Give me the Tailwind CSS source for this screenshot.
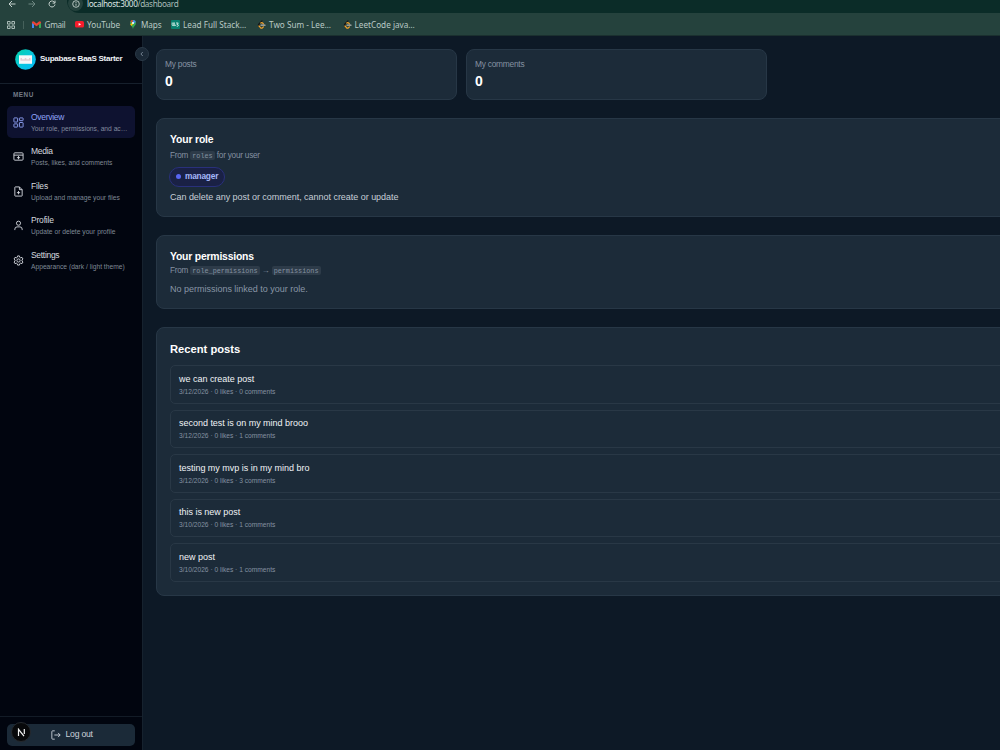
<!DOCTYPE html>
<html lang="en">
<head>
    <meta charset="UTF-8">
    <meta name="viewport" content="width=device-width, initial-scale=1.0">
    <title>Dashboard</title>
    <script src="https://cdn.jsdelivr.net/npm/@tailwindcss/browser@4"></script>
</head>
<body class="w-[1000px] h-[750px] overflow-hidden flex flex-col bg-[#0d1926] font-['Liberation_Sans',sans-serif]">
    <!-- Browser toolbar -->
    <header class="h-[36px] shrink-0 bg-[#25423d] border-b border-[#1b302f] font-['Noto_Sans',sans-serif] text-[#b9c9c5]">
        <div class="h-[13px] flex">
            <div class="w-[67px] shrink-0 flex pl-[8px] gap-[12px]">
                <svg class="size-[8px] text-[#c3d0cc]" viewBox="0 0 8 8" fill="none" stroke="currentColor" stroke-width="1"><path d="M7.5 4H1M4 1 1 4l3 3"/></svg>
                <svg class="size-[8px] text-[#6f8883]" viewBox="0 0 8 8" fill="none" stroke="currentColor" stroke-width="1"><path d="M.5 4H7M4 1l3 3-3 3"/></svg>
                <svg class="size-[8px] text-[#c3d0cc]" viewBox="0 0 8 8" fill="none" stroke="currentColor" stroke-width="1"><path d="M6.8 2.8A3 3 0 1 0 7 4.5M7 .6v2.5H4.6"/></svg>
            </div>
            <div class="flex-1 h-[13px] bg-[#0b2c28] rounded-bl-[12px] flex">
                <div class="size-[15px] -mt-[4px] ml-[1px] rounded-full bg-[#25423d] flex items-center justify-center">
                    <svg class="size-[8px] text-[#c3d0cc]" viewBox="0 0 8 8" fill="none" stroke="currentColor" stroke-width=".9"><circle cx="4" cy="4" r="3.3"/><path d="M4 3.6v2.2M4 2v.9"/></svg>
                </div>
                <span class="ml-[4px] -mt-[2px] text-[8.2px] leading-[12px] tracking-[-0.36px] whitespace-nowrap text-[#a9bcb8]"><span class="text-[#dbe5e2]">localhost:3000</span>/dashboard</span>
            </div>
        </div>
        <div class="h-[23px] flex items-center text-[8.2px] leading-[12px] whitespace-nowrap">
            <svg class="size-[8px] ml-[7px]" viewBox="0 0 8 8" fill="none" stroke="currentColor" stroke-width=".9"><path d="M.5.5h2.6v2.6H.5zM4.9.5h2.6v2.6H4.9zM.5 4.9h2.6v2.6H.5zM4.9 4.9h2.6v2.6H4.9z"/></svg>
            <div class="w-px h-[8px] ml-[8px] bg-[#46615b]"></div>
            <a class="ml-[8px] w-[43px] flex items-center gap-[3.5px] tracking-[-0.3px]">
                <svg class="w-[9px] h-[7px]" viewBox="0 0 9 7"><path fill="#4285f4" d="M0 1.5 2 3v4H.6Q0 7 0 6.4z"/><path fill="#34a853" d="M9 1.5 7 3v4h1.4q.6 0 .6-.6z"/><path fill="#ea4335" d="M0 1.2Q.5-.4 2 .5l2.5 2L7 .5q1.5-.9 2 .7v.8L4.5 5.3 0 2z"/></svg>
                Gmail
            </a>
            <a class="w-[54px] flex items-center gap-[3px]">
                <svg class="w-[9px] h-[7px]" viewBox="0 0 9 7"><rect width="9" height="6.6" rx="1.6" fill="#f61c2c"/><path fill="#fff" d="M3.6 1.9v2.8L6.1 3.3z"/></svg>
                YouTube
            </a>
            <a class="w-[42px] flex items-center gap-[4px] tracking-[-0.1px]">
                <svg class="w-[8px] h-[9px]" viewBox="0 0 8 9"><path fill="#34a853" d="M4 9C3.7 6.500 1 5.500 1 3a3 3 0 0 1 6 0C7 5.500 4.300 6.500 4 9z"/><path fill="#4285f4" d="M4 0a3 3 0 0 1 2.800 2L4 4z"/><path fill="#ea4335" d="M4 0a3 3 0 0 0-2.500 1.300L3 3z"/><path fill="#fbbc04" d="M1.200 4.200 3 3l1 1.200L2.300 6z"/><circle cx="4" cy="3" r="1.100" fill="#fff"/></svg>
                Maps
            </a>
            <a class="w-[86px] flex items-center gap-[3px]">
                <svg class="size-[9px]" viewBox="0 0 9 9"><rect width="9" height="9" rx="1" fill="#08806f"/><path d="M1.200 2.500v2.200q0 1 .9 1t.9-1V2.500v2.200q0 1 .9 1t.9-1M5 3h2.300L6.100 4.400q1.300 0 1.300 1t-1.700.8" fill="none" stroke="#d9f0eb" stroke-width=".9"/></svg>
                Lead Full Stack…
            </a>
            <a class="w-[86px] flex items-center gap-[3px]">
                <svg class="size-[9px]" viewBox="0 0 9 9" fill="none" stroke-width="1.200" stroke-linecap="round"><path stroke="#151515" d="M5 .8 2 3.800Q1 5 2 6"/><path stroke="#f5a32b" d="M2 6l1.500 1.700q1 .9 2 0l.9-.9M3.800 3q1-.8 1.800 0l.8.8"/><path stroke="#b8b8b8" d="M4 5.200h4"/></svg>
                Two Sum - Lee…
            </a>
            <a class="flex items-center gap-[2.500px]">
                <svg class="size-[9px]" viewBox="0 0 9 9" fill="none" stroke-width="1.200" stroke-linecap="round"><path stroke="#151515" d="M5 .8 2 3.800Q1 5 2 6"/><path stroke="#f5a32b" d="M2 6l1.500 1.700q1 .9 2 0l.9-.9M3.800 3q1-.8 1.800 0l.8.8"/><path stroke="#b8b8b8" d="M4 5.200h4"/></svg>
                LeetCode java…
            </a>
        </div>
    </header>

    <div class="flex flex-1 min-h-0">
        <!-- Sidebar -->
        <aside class="relative w-[143px] shrink-0 flex flex-col bg-[#01050f] border-r border-[#16222e]">
            <div class="h-[48px] shrink-0 flex items-center pl-[15px] gap-[4px] border-b border-[#16202c]">
                <svg class="size-[21px]" viewBox="0 0 21 21">
                    <defs><linearGradient id="logo" x1="0" y1="0" x2="1" y2="1"><stop offset="0" stop-color="#06d3a6"/><stop offset=".6" stop-color="#08c4e4"/><stop offset="1" stop-color="#08b9f5"/></linearGradient></defs>
                    <circle cx="10.500" cy="10.500" r="10.300" fill="url(#logo)"/>
                    <rect x="4" y="6.300" width="13" height="8.500" fill="#f7f7f8"/>
                    <path d="M5.500 9.800h1.500M9.800 9.800h1.500M14 9.800h1.500M5.500 11h10" stroke="#cfa5ae" stroke-width=".7"/>
                </svg>
                <span class="text-[8.100px] tracking-[-0.32px] font-bold text-[#eef1f5] whitespace-nowrap">Supabase BaaS Starter</span>
            </div>
            <button class="absolute top-[11px] left-[135px] size-[14px] rounded-full bg-[#1b2937] border border-[#2a3947] text-[#8794a3] flex items-center justify-center">
                <svg class="size-[6px]" viewBox="0 0 6 6" fill="none" stroke="currentColor" stroke-width=".8"><path d="M3.800 1 1.900 3l1.900 2"/></svg>
            </button>

            <p class="mt-[7px] ml-[13px] text-[6.400px] leading-[8px] tracking-[0.5px] font-bold text-[#737b87]">MENU</p>

            <nav class="mt-[7px] mx-[7px] flex flex-col gap-[2.500px] text-[#d5d9df]">
                <a class="h-[32px] rounded-[5px] bg-[#0e1230] flex items-center pl-[6px] gap-[7px] text-[#8fa2f5]">
                    <svg class="size-[11px] shrink-0" viewBox="0 0 24 24" fill="none" stroke="currentColor" stroke-width="2"><rect x="2" y="2" width="8" height="9" rx="1"/><rect x="14" y="2" width="8" height="6" rx="1"/><rect x="2" y="15" width="8" height="7" rx="1"/><rect x="14" y="12" width="8" height="10" rx="1"/></svg>
                    <div class="pt-[1px]">
                        <p class="text-[8.500px] leading-[11px] tracking-[-0.300px]">Overview</p>
                        <p class="text-[6.700px] leading-[11px] whitespace-nowrap text-[#838b9e]">Your role, permissions, and ac…</p>
                    </div>
                </a>
                <a class="h-[32px] flex items-center pl-[6px] gap-[7px]">
                    <svg class="size-[11px] shrink-0" viewBox="0 0 24 24" fill="none" stroke="currentColor" stroke-width="2"><rect x="2" y="4" width="20" height="16" rx="2"/><path d="M2 9h20M12 11v7M8.500 14.500h7"/></svg>
                    <div class="pt-[1px]">
                        <p class="text-[8.500px] leading-[11px] tracking-[-0.300px]">Media</p>
                        <p class="text-[6.700px] leading-[11px] whitespace-nowrap text-[#7f8996]">Posts, likes, and comments</p>
                    </div>
                </a>
                <a class="h-[32px] flex items-center pl-[6px] gap-[7px]">
                    <svg class="size-[11px] shrink-0" viewBox="0 0 24 24" fill="none" stroke="currentColor" stroke-width="2"><path d="M14 2H5a1 1 0 0 0-1 1v18a1 1 0 0 0 1 1h14a1 1 0 0 0 1-1V8zM14 2v6h6M12 11v7M8.500 14.500h7"/></svg>
                    <div class="pt-[1px]">
                        <p class="text-[8.500px] leading-[11px] tracking-[-0.200px]">Files</p>
                        <p class="text-[6.700px] leading-[11px] whitespace-nowrap text-[#7f8996]">Upload and manage your files</p>
                    </div>
                </a>
                <a class="h-[32px] flex items-center pl-[6px] gap-[7px]">
                    <svg class="size-[11px] shrink-0" viewBox="0 0 24 24" fill="none" stroke="currentColor" stroke-width="2"><circle cx="12" cy="7" r="4.500"/><path d="M4 22v-2q0-5 5-5h6q5 0 5 5v2"/></svg>
                    <div class="pt-[1px]">
                        <p class="text-[8.500px] leading-[11px] tracking-[-0.200px]">Profile</p>
                        <p class="text-[6.700px] leading-[11px] whitespace-nowrap text-[#7f8996]">Update or delete your profile</p>
                    </div>
                </a>
                <a class="h-[32px] flex items-center pl-[6px] gap-[7px]">
                    <svg class="size-[11px] shrink-0" viewBox="0 0 24 24" fill="none" stroke="currentColor" stroke-width="2" stroke-linejoin="round"><path d="M10 2h4l.7 3 2 1.200 3-1 2 3.500L19.500 11v2l2.200 2.300-2 3.500-3-1-2 1.200-.7 3h-4l-.7-3-2-1.200-3 1-2-3.500L4.500 13v-2L2.300 8.700l2-3.500 3 1 2-1.200z"/><circle cx="12" cy="12" r="3.500"/></svg>
                    <div class="pt-[1px]">
                        <p class="text-[8.500px] leading-[11px] tracking-[-0.300px]">Settings</p>
                        <p class="text-[6.700px] leading-[11px] whitespace-nowrap text-[#7f8996]">Appearance (dark / light theme)</p>
                    </div>
                </a>
            </nav>

            <div class="relative mt-auto h-[34px] border-t border-[#121b26] px-[7px] pt-[7px]">
                <button class="w-full h-[22px] rounded-[5px] bg-[#1b2a38] flex items-center pl-[43.500px] gap-[5px] text-[8.700px] tracking-[-0.250px] text-[#c9d0d8]">
                    <svg class="size-[10px]" viewBox="0 0 24 24" fill="none" stroke="currentColor" stroke-width="2.200"><path d="M9 2H4a2 2 0 0 0-2 2v16a2 2 0 0 0 2 2h5M8 12h14M17 7l5 5-5 5"/></svg>
                    Log out
                </button>
                <div class="absolute left-[11px] top-[5px] size-[20px] rounded-full bg-[#08090b] border border-[#25292e] flex items-center justify-center">
                    <svg class="size-[9px]" viewBox="0 0 9 9" fill="none" stroke="#f2f2f2" stroke-width="1.200"><path d="M1.500 8V1.300L7 8.200M7.300 1v5"/></svg>
                </div>
            </div>
        </aside>

        <!-- Dashboard -->
        <main class="flex-1 min-w-0 overflow-hidden pl-[13px] pt-[13px]">
            <div class="w-[930px] flex flex-col gap-[18px]">
                <div class="flex gap-[9px]">
                    <div class="w-[301px] h-[50.500px] rounded-[8px] bg-[#1c2b39] border border-[#273746] px-[8px] pt-[9px]">
                        <p class="text-[8.400px] leading-[11px] tracking-[-0.250px] text-[#8491a1]">My posts</p>
                        <p class="mt-[2px] text-[14px] leading-[18px] font-bold text-white">0</p>
                    </div>
                    <div class="w-[301px] h-[50.500px] rounded-[8px] bg-[#1c2b39] border border-[#273746] px-[8px] pt-[9px]">
                        <p class="text-[8.400px] leading-[11px] tracking-[-0.250px] text-[#8491a1]">My comments</p>
                        <p class="mt-[2px] text-[14px] leading-[18px] font-bold text-white">0</p>
                    </div>
                </div>

                <section class="h-[99px] rounded-[8px] bg-[#1c2b39] border border-[#273746] px-[13px] pt-[13px]">
                    <h2 class="text-[10.400px] leading-[16px] tracking-[-0.150px] font-bold text-white">Your role</h2>
                    <p class="mt-[2px] text-[8.200px] leading-[11px] tracking-[-0.220px] text-[#8491a1]">From <code class="rounded-[2px] bg-[#2d3b49] px-[2px] py-[0.500px] font-['Liberation_Mono',monospace] text-[6.800px] tracking-normal">roles</code> for your user</p>
                    <div class="mt-[5px] -ml-px w-[56px] h-[20px] rounded-full bg-[#1a2145] border border-[#29307b] flex items-center pl-[6px] gap-[4px] text-[8.300px] tracking-[-0.200px] font-bold text-[#a5b7f9]">
                        <i class="size-[5px] rounded-full bg-[#5865f2]"></i>manager
                    </div>
                    <p class="mt-[4px] text-[9px] leading-[13px] tracking-[-0.030px] text-[#c6ced7]">Can delete any post or comment, cannot create or update</p>
                </section>

                <section class="h-[74.500px] rounded-[8px] bg-[#1c2b39] border border-[#273746] px-[13px] pt-[13px]">
                    <h2 class="text-[10.400px] leading-[16px] tracking-[-0.200px] font-bold text-white">Your permissions</h2>
                    <p class="text-[8.200px] leading-[11px] tracking-[-0.220px] text-[#8491a1]">From <code class="rounded-[2px] bg-[#2d3b49] px-[2px] py-[0.500px] font-['Liberation_Mono',monospace] text-[6.800px] tracking-normal">role_permissions</code> → <code class="rounded-[2px] bg-[#2d3b49] px-[2px] py-[0.500px] font-['Liberation_Mono',monospace] text-[6.800px] tracking-normal">permissions</code></p>
                    <p class="mt-[6px] text-[9px] leading-[13px] tracking-[-0.010px] text-[#8996a6]">No permissions linked to your role.</p>
                </section>

                <section class="h-[268.500px] rounded-[8px] bg-[#1c2b39] border border-[#273746] px-[13px] pt-[12.500px]">
                    <h2 class="text-[11.200px] leading-[16px] font-bold text-white">Recent posts</h2>
                    <ul class="mt-[8.500px] flex flex-col gap-[6px]">
                        <li class="h-[38.600px] rounded-[5px] border border-[#293846] px-[8px] pt-[6.500px]">
                            <p class="text-[9px] leading-[13px] tracking-[-0.020px] text-[#f0f3f6]">we can create post</p>
                            <p class="mt-[1px] text-[6.650px] leading-[10px] text-[#8491a1]">3/12/2026 · 0 likes · 0 comments</p>
                        </li>
                        <li class="h-[38.600px] rounded-[5px] border border-[#293846] px-[8px] pt-[6.500px]">
                            <p class="text-[9px] leading-[13px] tracking-[-0.020px] text-[#f0f3f6]">second test is on my mind brooo</p>
                            <p class="mt-[1px] text-[6.650px] leading-[10px] text-[#8491a1]">3/12/2026 · 0 likes · 1 comments</p>
                        </li>
                        <li class="h-[38.600px] rounded-[5px] border border-[#293846] px-[8px] pt-[6.500px]">
                            <p class="text-[9px] leading-[13px] tracking-[-0.020px] text-[#f0f3f6]">testing my mvp is in my mind bro</p>
                            <p class="mt-[1px] text-[6.650px] leading-[10px] text-[#8491a1]">3/12/2026 · 0 likes · 3 comments</p>
                        </li>
                        <li class="h-[38.600px] rounded-[5px] border border-[#293846] px-[8px] pt-[6.500px]">
                            <p class="text-[9px] leading-[13px] tracking-[-0.020px] text-[#f0f3f6]">this is new post</p>
                            <p class="mt-[1px] text-[6.650px] leading-[10px] text-[#8491a1]">3/10/2026 · 0 likes · 1 comments</p>
                        </li>
                        <li class="h-[38.600px] rounded-[5px] border border-[#293846] px-[8px] pt-[6.500px]">
                            <p class="text-[9px] leading-[13px] tracking-[-0.020px] text-[#f0f3f6]">new post</p>
                            <p class="mt-[1px] text-[6.650px] leading-[10px] text-[#8491a1]">3/10/2026 · 0 likes · 1 comments</p>
                        </li>
                    </ul>
                </section>
            </div>
        </main>
    </div>
</body>
</html>
